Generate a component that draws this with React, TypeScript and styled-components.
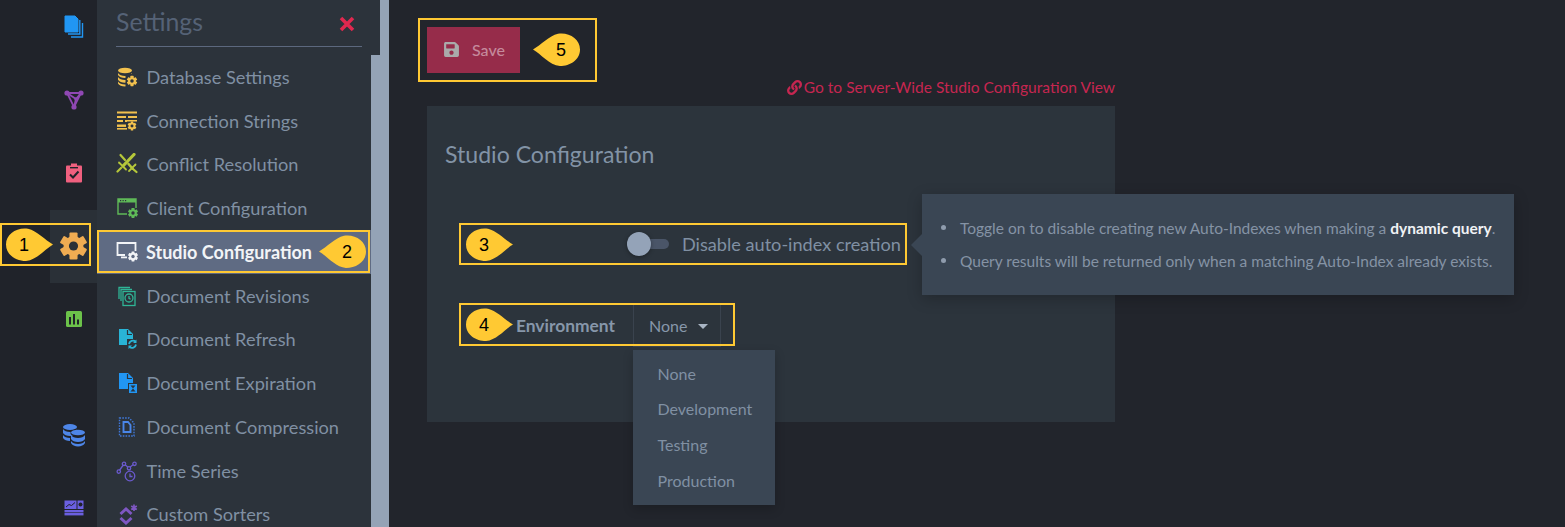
import React from "react";
import styled, { createGlobalStyle } from "styled-components";
import { FaLink, FaSave } from "react-icons/fa";

const Global = createGlobalStyle`
  html, body { margin: 0; padding: 0; background: #22252c; }
  body { font-family: Lato, "Open Sans", sans-serif; overflow: hidden; }
  * { box-sizing: border-box; }
`;

const PANEL = "#2c333b";

const Page = styled.div`
  position: relative;
  display: flex;
  width: 1565px;
  height: 527px;
  overflow: hidden;
  background: #22252c;
`;

const Rail = styled.nav`
  width: 97px;
  flex: none;
  margin-top: -9.5px;
  display: flex;
  flex-direction: column;
  align-items: flex-end;
  background: #20232a;
`;

const RailItem = styled.div<{ $active?: boolean; $gap?: boolean }>`
  width: 47px;
  height: 73px;
  flex: none;
  margin-top: ${(p) => (p.$gap ? "43px" : "0")};
  display: flex;
  align-items: center;
  justify-content: center;
  background: ${(p) => (p.$active ? "#2a3037" : "transparent")};
`;

const SettingsColumn = styled.aside`
  width: 292px;
  flex: none;
  background: #94a3b6;
  display: flex;
  flex-direction: column;
  align-items: flex-start;
`;

const SettingsHeader = styled.header`
  width: 283px;
  height: 55px;
  flex: none;
  padding: 0 18px 0 19px;
  background: ${PANEL};
`;

const HeaderInner = styled.div`
  height: 47px;
  display: flex;
  align-items: center;
  justify-content: space-between;
  border-bottom: 1px solid #5c687e;
  padding: 0 7px 2px 0;
`;

const SettingsTitle = styled.h2`
  margin: 0;
  font-size: 24.8px;
  line-height: 30px;
  font-weight: 400;
  color: #556276;
`;

const CloseButton = styled.span`
  display: flex;
  line-height: 0;
  margin-top: 3px;
`;

const MenuList = styled.ul`
  list-style: none;
  margin: 0;
  padding: 0;
  width: 274px;
  flex: 1;
  background: ${PANEL};
`;

const MenuItem = styled.li<{ $active?: boolean }>`
  height: 43.75px;
  display: flex;
  align-items: center;
  gap: ${(p) => (p.$active ? "8px" : "8.5px")};
  padding-left: 19px;
  font-size: ${(p) => (p.$active ? "18px" : "18.2px")};
  font-weight: ${(p) => (p.$active ? 700 : 400)};
  color: ${(p) => (p.$active ? "#f2f4f7" : "#8090a3")};
  background: ${(p) => (p.$active ? "#5f6b83" : "transparent")};
  white-space: nowrap;
`;

const Main = styled.main`
  flex: 1;
  padding: 27px 0 0 38px;
  background: #22252c;
`;

const SaveButton = styled.button`
  width: 93px;
  height: 46px;
  border: 0;
  padding: 0 0 1px 16px;
  display: flex;
  align-items: center;
  gap: 12px;
  background: #962c4a;
  color: #c58a9c;
  font-family: inherit;
  font-size: 16px;
  font-weight: 500;
`;

const LinkRow = styled.div`
  width: 688px;
  height: 28px;
  margin-bottom: 5px;
  display: flex;
  align-items: center;
  justify-content: flex-end;
  gap: 2px;
  color: #c62650;
  font-size: 15.55px;
`;

const Card = styled.section`
  position: relative;
  width: 688px;
  height: 316px;
  padding-top: 32px;
  background: #2c343c;
`;

const CardTitle = styled.h1`
  margin: 0 0 0 18px;
  font-size: 23.1px;
  line-height: 32px;
  font-weight: 400;
  color: #8293a6;
`;

const FieldRow = styled.div<{ $top: number }>`
  margin-top: ${(p) => p.$top}px;
  display: grid;
  grid-template-columns: 188px 1fr;
  column-gap: 18px;
  align-items: center;
`;

const ToggleField = styled.div`
  grid-column: 2;
  margin-left: -6px;
  display: flex;
  align-items: center;
  gap: 13px;
  height: 24px;
`;

const Toggle = styled.span`
  position: relative;
  width: 42px;
  height: 10px;
  border-radius: 5px;
  background: #4a5568;
`;

const Knob = styled.span`
  position: absolute;
  left: 0;
  top: -7px;
  width: 24px;
  height: 24px;
  border-radius: 50%;
  background: #94a3b8;
  box-shadow: 0 1px 4px rgba(0, 0, 0, 0.35);
`;

const ToggleLabel = styled.span`
  font-size: 18.15px;
  color: #8090a3;
  white-space: nowrap;
`;

const EnvLabel = styled.label`
  text-align: right;
  font-size: 17.4px;
  font-weight: 700;
  color: #8797aa;
`;

const DropButton = styled.div`
  width: 88px;
  height: 44px;
  border: 1px solid #3a434e;
  display: flex;
  align-items: center;
  padding-left: 15px;
  gap: 11px;
  font-size: 16px;
  color: #8797aa;
`;

const Caret = styled.span`
  width: 0;
  height: 0;
  margin-top: 3px;
  border-left: 5px solid transparent;
  border-right: 5px solid transparent;
  border-top: 5px solid #a9b5c4;
`;

const DropMenu = styled.ul`
  position: absolute;
  left: 206px;
  top: 244px;
  width: 142px;
  height: 155px;
  margin: 0;
  padding: 5.5px 0 0 24.5px;
  list-style: none;
  background: #3a4654;
  box-shadow: 0 4px 10px rgba(0, 0, 0, 0.2);
`;

const DropItem = styled.li`
  height: 35.7px;
  line-height: 35.7px;
  font-size: 16px;
  color: #8090a3;
`;

const Tooltip = styled.div`
  position: absolute;
  left: 495px;
  top: 88px;
  width: 592px;
  height: 101px;
  padding: 17px 0 0 19px;
  background: #3a4654;
  box-shadow: 0 4px 14px rgba(0, 0, 0, 0.22);
  &::before {
    content: "";
    position: absolute;
    left: -11px;
    top: 40px;
    border-top: 11px solid transparent;
    border-bottom: 11px solid transparent;
    border-right: 11px solid #3a4654;
  }
`;

const TipLine = styled.div`
  display: flex;
  align-items: center;
  gap: 14px;
  height: 33px;
  font-size: 15.5px;
  color: #8593a5;
  white-space: nowrap;
`;

const Dot = styled.span`
  width: 5px;
  height: 5px;
  border-radius: 50%;
  background: #8f9cad;
  flex: none;
`;

const Strong = styled.b`
  color: #f0f2f5;
  font-weight: 700;
`;

const Highlight = styled.div<{ $x: number; $y: number; $w: number; $h: number }>`
  position: absolute;
  left: ${(p) => p.$x}px;
  top: ${(p) => p.$y}px;
  width: ${(p) => p.$w}px;
  height: ${(p) => p.$h}px;
  border: 2px solid #ffc933;
  pointer-events: none;
`;

const CalloutBox = styled.div<{ $x: number; $y: number }>`
  position: absolute;
  left: ${(p) => p.$x}px;
  top: ${(p) => p.$y}px;
  width: 47px;
  height: 33px;
  line-height: 0;
`;

const CalloutNumber = styled.span<{ $left: boolean }>`
  position: absolute;
  top: 0;
  left: ${(p) => (p.$left ? "12px" : "2px")};
  width: 32px;
  height: 33px;
  display: flex;
  align-items: center;
  justify-content: center;
  font-family: "Liberation Sans", Arial, sans-serif;
  font-size: 18px;
  color: #000;
`;

function Callout({ x, y, n, left }: { x: number; y: number; n: number; left?: boolean }) {
  return (
    <CalloutBox $x={x} $y={y}>
      <svg width="47" height="33" viewBox="0 0 47 33">
        <path
          d={
            left
              ? "M0 16.5 C8 12 16 3 25 .8 C36-1 47 6 47 16.5 C47 27 37 33 27 33 C16 32 8 21 0 16.5Z"
              : "M47 16.5 C39 12 31 3 22 .8 C11-1 0 6 0 16.5 C0 27 10 33 20 33 C31 32 39 21 47 16.5Z"
          }
          fill="#ffc933"
        />
      </svg>
      <CalloutNumber $left={!!left}>{n}</CalloutNumber>
    </CalloutBox>
  );
}

function Gear({ cx, cy, r, color, hole = PANEL }: { cx: number; cy: number; r: number; color: string; hole?: string }) {
  const teeth = [0, 60, 120];
  return (
    <g>
      {teeth.map((a) => (
        <rect
          key={a}
          x={cx - r * 0.3}
          y={cy - r}
          width={r * 0.6}
          height={r * 2}
          rx={r * 0.08}
          fill={color}
          transform={`rotate(${a} ${cx} ${cy})`}
        />
      ))}
      <circle cx={cx} cy={cy} r={r * 0.74} fill={color} />
      <circle cx={cx} cy={cy} r={r * 0.34} fill={hole} />
    </g>
  );
}

const Ico = ({ children, w = 22, h = 22 }: { children: React.ReactNode; w?: number; h?: number }) => (
  <svg width={w} height={h} viewBox={`0 0 ${w} ${h}`} style={{ flex: "none" }}>
    {children}
  </svg>
);

const DatabaseIcon = () => (
  <Ico>
    <g fill="#f2c14e">
      <ellipse cx="9" cy="4.5" rx="7" ry="2.8" />
      <path d="M2 7c1 2 4 3 7 3s6-1 7-3v2c-1 2-4 3-7 3s-6-1-7-3z" />
      <path d="M2 11c1 2 4 3 7 3l1 0v2.6l-1 .2c-3 0-6-1-7-3z" />
      <path d="M2 15.5c1 2 4 3 7 3l2 0v1.8l-2 .2c-3 0-6-1-7-3z" />
    </g>
    <rect x="9.5" y="8" width="12" height="13" fill={PANEL} />
    <Gear cx={16} cy={15} r={5.2} color="#f2c14e" />
  </Ico>
);

const ConnectionIcon = () => (
  <Ico>
    <g fill="#f2c14e">
      <rect x="1" y="1.5" width="20" height="2" />
      <rect x="1" y="6" width="9" height="2" />
      <rect x="12" y="6" width="9" height="2" />
      <rect x="1" y="10" width="6" height="2" />
      <rect x="9" y="10" width="12" height="2" />
      <rect x="1" y="14.5" width="9" height="2.4" />
      <rect x="1" y="18" width="10" height="1.6" />
    </g>
    <rect x="11" y="11.5" width="11" height="10" fill={PANEL} />
    <Gear cx={16} cy={16} r={4.4} color="#f2c14e" />
  </Ico>
);

const SwordsIcon = () => (
  <Ico>
    <g stroke="#b5c73a" strokeLinecap="round" fill="none">
      <path d="M18 1.5 L7 13" strokeWidth="3.2" />
      <path d="M3 9.5 L10 16.5" strokeWidth="1.8" />
      <path d="M5 15 L1.5 18.5" strokeWidth="2.2" />
      <path d="M4.5 2 L9 7" strokeWidth="2.2" />
      <path d="M12.5 11 L16.5 15.5" strokeWidth="2.6" />
      <path d="M19.5 11.5 L13 18" strokeWidth="1.8" />
      <path d="M17 16 L20.5 19" strokeWidth="2.2" />
    </g>
  </Ico>
);

const ClientIcon = () => (
  <Ico>
    <path d="M16 17H2V2h18v10" fill="none" stroke="#5fba58" strokeWidth="1.4" />
    <rect x="2" y="2" width="18" height="3.5" fill="#5fba58" />
    <g fill={PANEL}>
      <rect x="4" y="3" width="1.2" height="1.2" />
      <rect x="6.5" y="3" width="1.2" height="1.2" />
      <rect x="9" y="3" width="1.2" height="1.2" />
    </g>
    <rect x="11" y="11" width="11" height="11" fill={PANEL} />
    <Gear cx={17} cy={16} r={5} color="#5fba58" />
  </Ico>
);

const StudioIcon = () => (
  <Ico>
    <path d="M9 14H1.5V2h18v8" fill="none" stroke="#f2f4f7" strokeWidth="1.8" />
    <rect x="5" y="15.5" width="6" height="1.8" fill="#f2f4f7" />
    <Gear cx={17} cy={15.5} r={5} color="#f2f4f7" hole="#5f6b83" />
  </Ico>
);

const RevisionsIcon = () => (
  <Ico>
    <g fill="none" stroke="#2fb596" strokeWidth="1.3">
      <path d="M3 14V2.5h11" />
      <path d="M5 16V4.5h11" />
      <rect x="7" y="6.5" width="12" height="14" fill={PANEL} />
      <circle cx="13" cy="13" r="4" />
      <path d="M13 11v2.3l1.6 1" />
    </g>
  </Ico>
);

const PageShape = ({ fill }: { fill: string }) => (
  <g>
    <path d="M3 1h9l5 5v11H3z" fill={fill} />
    <path d="M11.5 2v4.5H16" fill="none" stroke={PANEL} strokeWidth="1.2" />
  </g>
);

const RefreshIcon = () => (
  <Ico>
    <PageShape fill="#29b4d6" />
    <rect x="11" y="11" width="11" height="11" fill={PANEL} />
    <g fill="none" stroke="#29b4d6" strokeWidth="1.8">
      <path d="M13 16a4 4 0 0 1 6.5-2.5" />
      <path d="M20 16.5a4 4 0 0 1-6.5 2.5" />
    </g>
    <path d="M20.5 11.5v3.5h-3.5zM12.5 21v-3.5H16z" fill="#29b4d6" />
  </Ico>
);

const ExpirationIcon = () => (
  <Ico>
    <path d="M3 1h9l5 5v5h-5v6H3z" fill="#2196f3" />
    <path d="M11.5 2v4.5H16" fill="none" stroke={PANEL} strokeWidth="1.2" />
    <rect x="13" y="12" width="8" height="9" fill="#2196f3" />
    <path d="M14.5 13.5h5l-2.5 3 2.5 3h-5l2.5-3z" fill={PANEL} />
  </Ico>
);

const CompressionIcon = () => (
  <Ico>
    <path d="M3.5 2h9.5l5 5v13H3.5z" fill="none" stroke="#3f78d8" strokeWidth="1.4" strokeDasharray="1.6 1.2" />
    <path d="M7.5 6h4.5l2.5 3v7h-7z" fill="none" stroke="#4a86e8" strokeWidth="1.9" />
  </Ico>
);

const TimeSeriesIcon = () => (
  <Ico>
    <g fill="none" stroke="#6a5acd" strokeWidth="1.3">
      <path d="M3 11 L8 4 L13 8 L18 4" />
      <circle cx="2.8" cy="11.6" r="1.7" fill={PANEL} />
      <circle cx="8" cy="3.8" r="1.7" fill={PANEL} />
      <circle cx="13" cy="8.3" r="1.7" fill={PANEL} />
      <circle cx="18.5" cy="3.8" r="1.7" fill={PANEL} />
      <circle cx="14" cy="16" r="4.8" fill={PANEL} />
      <path d="M14 13.5v3h2.5" />
    </g>
  </Ico>
);

const SortersIcon = () => (
  <Ico>
    <g fill="none" stroke="#7e57c2" strokeWidth="3">
      <path d="M4.5 11 L10 6 L15.5 11" />
      <path d="M4.5 15 L10 20 L15.5 15" />
    </g>
    <g stroke="#7e57c2" strokeWidth="1.7">
      <path d="M18 1.5v6.5M15.2 3.1l5.6 3.3M20.8 3.1l-5.6 3.3" />
    </g>
  </Ico>
);

const CloseIcon = () => (
  <svg width="16" height="16" viewBox="0 0 16 16">
    <path d="M2 2 L14 14 M14 2 L2 14" stroke="#e0284f" strokeWidth="3.6" />
  </svg>
);

const DocsIcon = () => (
  <svg width="20" height="24" viewBox="0 0 20 24">
    <path d="M1 1h10l3 3v13H1z" fill="#2196f3" stroke="#2196f3" strokeLinejoin="round" />
    <path d="M15.8 5v14H4M18.5 8v14H7" fill="none" stroke="#2196f3" strokeWidth="1.4" />
  </svg>
);

const GraphIcon = () => (
  <svg width="20" height="20" viewBox="0 0 20 20">
    <g fill="none" stroke="#9048b4" strokeWidth="1.8">
      <path d="M3 3 L17 3 L10 17 Z" />
      <path d="M3 3 L12 9 L17 3 M12 9 L10 17" />
    </g>
    <g fill="#9048b4">
      <circle cx="3" cy="3" r="2.6" />
      <circle cx="17" cy="3" r="2.6" />
      <circle cx="10" cy="17" r="2.6" />
      <circle cx="12" cy="9" r="1.8" />
    </g>
  </svg>
);

const TasksIcon = () => (
  <svg width="18" height="20" viewBox="0 0 18 20">
    <rect x="1" y="2.5" width="16" height="17" rx="1" fill="#f0607f" />
    <rect x="6" y="0.5" width="6" height="3" fill="#f0607f" />
    <rect x="5" y="4" width="8" height="1.4" fill="#20232a" />
    <path d="M5 11.5 L8 14.5 L13.5 8.5" fill="none" stroke="#20232a" strokeWidth="2" />
  </svg>
);

const CogIcon = () => (
  <svg width="27" height="28" viewBox="0 0 27 28">
    <Gear cx={13.5} cy={14} r={13.5} color="#f0ac52" hole="#2a3037" />
  </svg>
);

const StatsIcon = () => (
  <svg width="18" height="18" viewBox="0 0 18 18">
    <rect x="1" y="1" width="16" height="16" rx="1.5" fill="#6cc24a" />
    <g fill="#20232a">
      <rect x="4" y="7" width="2" height="7.5" />
      <rect x="8" y="4" width="2" height="10.5" />
      <rect x="12" y="9.5" width="2" height="5" />
    </g>
  </svg>
);

const StorageIcon = () => (
  <svg width="24" height="24" viewBox="0 0 24 24">
    <g fill="#4e86e8">
      <ellipse cx="8" cy="4" rx="7" ry="3" />
      <path d="M1 6c1 2 4 3 7 3s6-1 7-3v4c-1 2-4 3-7 3s-6-1-7-3z" />
      <path d="M1 12c1 2 4 3 7 3v3c-3 0-6-1-7-3z" />
    </g>
    <ellipse cx="16" cy="10" rx="7.6" ry="3.8" fill="#20232a" />
    <g fill="#4e86e8">
      <ellipse cx="16" cy="9.5" rx="7" ry="2.8" />
      <path d="M9 12c1 2 4 3 7 3s6-1 7-3v4c-1 2-4 3-7 3s-6-1-7-3z" />
      <path d="M9 18c1 2 4 3 7 3s6-1 7-3v2c-1 2-4 3.5-7 3.5s-6-1.5-7-3.5z" />
    </g>
  </svg>
);

const DashIcon = () => (
  <svg width="20" height="16" viewBox="0 0 20 16">
    <g fill="#6a5fe0">
      <rect x="0.5" y="0.5" width="12" height="8.5" />
      <rect x="13.5" y="0.5" width="6" height="8.5" />
      <rect x="0.5" y="10" width="19" height="2.4" />
      <rect x="0.5" y="13" width="19" height="2.4" />
    </g>
    <path d="M2 7 L5 4.5 L7.5 5.5 L11 2.5" fill="none" stroke="#20232a" strokeWidth="1" />
    <circle cx="16.5" cy="4.5" r="2" fill="#20232a" />
  </svg>
);

const menu: { label: string; icon: React.ReactNode; active?: boolean }[] = [
  { label: "Database Settings", icon: <DatabaseIcon /> },
  { label: "Connection Strings", icon: <ConnectionIcon /> },
  { label: "Conflict Resolution", icon: <SwordsIcon /> },
  { label: "Client Configuration", icon: <ClientIcon /> },
  { label: "Studio Configuration", icon: <StudioIcon />, active: true },
  { label: "Document Revisions", icon: <RevisionsIcon /> },
  { label: "Document Refresh", icon: <RefreshIcon /> },
  { label: "Document Expiration", icon: <ExpirationIcon /> },
  { label: "Document Compression", icon: <CompressionIcon /> },
  { label: "Time Series", icon: <TimeSeriesIcon /> },
  { label: "Custom Sorters", icon: <SortersIcon /> },
];

export default function App() {
  return (
    <Page>
      <Global />
      <Rail>
        <RailItem><DocsIcon /></RailItem>
        <RailItem><GraphIcon /></RailItem>
        <RailItem><TasksIcon /></RailItem>
        <RailItem $active><CogIcon /></RailItem>
        <RailItem><StatsIcon /></RailItem>
        <RailItem $gap><StorageIcon /></RailItem>
        <RailItem><DashIcon /></RailItem>
      </Rail>
      <SettingsColumn>
        <SettingsHeader>
          <HeaderInner>
            <SettingsTitle>Settings</SettingsTitle>
            <CloseButton><CloseIcon /></CloseButton>
          </HeaderInner>
        </SettingsHeader>
        <MenuList>
          {menu.map((m) => (
            <MenuItem key={m.label} $active={m.active}>
              {m.icon}
              {m.label}
            </MenuItem>
          ))}
        </MenuList>
      </SettingsColumn>
      <Main>
        <SaveButton>
          <FaSave size={17} color="#aaaaaa" />
          Save
        </SaveButton>
        <LinkRow>
          <FaLink size={15} />
          Go to Server-Wide Studio Configuration View
        </LinkRow>
        <Card>
          <CardTitle>Studio Configuration</CardTitle>
          <FieldRow $top={62}>
            <ToggleField>
              <Toggle><Knob /></Toggle>
              <ToggleLabel>Disable auto-index creation</ToggleLabel>
            </ToggleField>
          </FieldRow>
          <FieldRow $top={47}>
            <EnvLabel>Environment</EnvLabel>
            <DropButton>None<Caret /></DropButton>
          </FieldRow>
          <DropMenu>
            <DropItem>None</DropItem>
            <DropItem>Development</DropItem>
            <DropItem>Testing</DropItem>
            <DropItem>Production</DropItem>
          </DropMenu>
          <Tooltip>
            <TipLine>
              <Dot />
              <span>Toggle on to disable creating new Auto-Indexes when making a <Strong>dynamic query</Strong>.</span>
            </TipLine>
            <TipLine>
              <Dot />
              <span>Query results will be returned only when a matching Auto-Index already exists.</span>
            </TipLine>
          </Tooltip>
        </Card>
      </Main>
      <Highlight $x={0} $y={223} $w={91} $h={43} />
      <Highlight $x={97} $y={230} $w={273} $h={43} />
      <Highlight $x={459} $y={223} $w={448} $h={42} />
      <Highlight $x={459} $y={303} $w={276} $h={43} />
      <Highlight $x={418} $y={18} $w={179} $h={64} />
      <Callout x={6} y={228} n={1} />
      <Callout x={319} y={235} n={2} left />
      <Callout x={466} y={228} n={3} />
      <Callout x={466} y={308} n={4} />
      <Callout x={533} y={33} n={5} left />
    </Page>
  );
}
